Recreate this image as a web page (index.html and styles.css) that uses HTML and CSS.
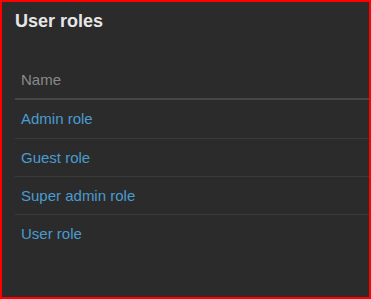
FILE: index.html
```html
<!DOCTYPE html>
<html lang="en">
<head>
<meta charset="utf-8">
<title>User roles</title>
<link rel="stylesheet" href="styles.css">
</head>
<body>
<section class="panel">
  <h2 class="panel-title">User roles</h2>
  <table class="roles">
    <thead>
      <tr><th>Name</th></tr>
    </thead>
    <tbody>
      <tr><td><a href="#">Admin role</a></td></tr>
      <tr><td><a href="#">Guest role</a></td></tr>
      <tr><td><a href="#">Super admin role</a></td></tr>
      <tr><td><a href="#">User role</a></td></tr>
    </tbody>
  </table>
</section>
</body>
</html>
```
FILE: styles.css
```css
html, body {
  margin: 0;
  padding: 0;
  background: #2b2b2b;
}

body {
  font-family: "Liberation Sans", Arial, sans-serif;
  font-size: 15px;
  line-height: 1.42857;
}

.panel {
  box-sizing: border-box;
  width: 371px;
  height: 299px;
  border: 2px solid #ff0000;
  background: #2b2b2b;
  padding: 10px 0 0 13px;
  overflow: hidden;
}

.panel-title {
  margin: 0 0 29px;
  font-size: 18px;
  line-height: 1.1;
  font-weight: bold;
  color: #e6e6e6;
}

.roles {
  width: 100%;
  border-collapse: separate;
  border-spacing: 0;
}

.roles th,
.roles td {
  padding: 8px 6px;
  text-align: left;
}

.roles th {
  font-weight: normal;
  color: #8a8a8a;
  border-bottom: 2px solid #474747;
}

.roles td {
  border-top: 1px solid #3b3b3b;
}

.roles tbody tr:first-child td {
  border-top: 0;
}

.roles a {
  color: #4a9bd0;
  text-decoration: none;
}
```
